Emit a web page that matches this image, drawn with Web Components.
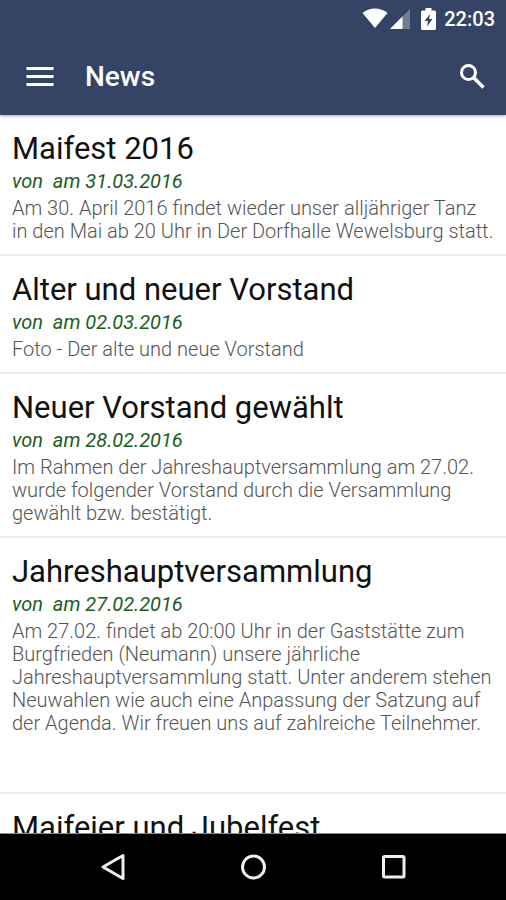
<!DOCTYPE html>
<html lang="de">
<head>
<meta charset="utf-8" />
<meta name="viewport" content="width=device-width, initial-scale=1" />
<title>News</title>
<style>
  html,
  body {
    height: 100%;
    margin: 0;
  }
  body {
    font-family: Roboto, "Liberation Sans", sans-serif;
    background: #fff;
  }
</style>
</head>
<body>
<news-app>
  <status-bar slot="top">22:03</status-bar>
  <app-bar slot="top">News</app-bar>

  <news-item>
    <span slot="title">Maifest 2016</span>
    <span slot="date">31.03.2016</span>
    <span slot="text">Am 30. April 2016 findet wieder unser alljähriger Tanz in den Mai ab 20 Uhr in Der Dorfhalle Wewelsburg statt.</span>
  </news-item>
  <news-item>
    <span slot="title">Alter und neuer Vorstand</span>
    <span slot="date">02.03.2016</span>
    <span slot="text">Foto - Der alte und neue Vorstand</span>
  </news-item>
  <news-item>
    <span slot="title">Neuer Vorstand gewählt</span>
    <span slot="date">28.02.2016</span>
    <span slot="text">Im Rahmen der Jahreshauptversammlung am 27.02. wurde folgender Vorstand durch die Versammlung gewählt bzw. bestätigt.</span>
  </news-item>
  <news-item>
    <span slot="title">Jahreshauptversammlung</span>
    <span slot="date">27.02.2016</span>
    <span slot="text">Am 27.02. findet ab 20:00 Uhr in der Gaststätte zum Burgfrieden (Neumann) unsere jährliche Jahreshauptversammlung statt. Unter anderem stehen Neuwahlen wie auch eine Anpassung der Satzung auf der Agenda. Wir freuen uns auf zahlreiche Teilnehmer.<br /><br /><br /></span>
  </news-item>
  <news-item>
    <span slot="title">Maifeier und Jubelfest</span>
  </news-item>

  <nav-bar slot="bottom"></nav-bar>
</news-app>

<script>
  class NewsApp extends HTMLElement {
    constructor() {
      super();
      let shadowDom = this.attachShadow({ mode: "open" });
      shadowDom.innerHTML = `
        <style>
          :host {
            display: flex;
            flex-direction: column;
            height: 100vh;
          }
          header {
            background: #354464;
            color: #fff;
            box-shadow: 0 1px 3px rgba(0, 0, 0, 0.35);
            z-index: 1;
          }
          main {
            flex: 1;
            min-height: 0;
            overflow: hidden;
          }
        </style>
        <header><slot name="top"></slot></header>
        <main><slot></slot></main>
        <slot name="bottom"></slot>
      `;
    }
  }

  class StatusBar extends HTMLElement {
    constructor() {
      super();
      let shadowDom = this.attachShadow({ mode: "open" });
      shadowDom.innerHTML = `
        <style>
          :host {
            display: flex;
            justify-content: flex-end;
            align-items: center;
            height: 38px;
            padding-right: 11px;
            font-size: 20px;
            font-weight: 500;
          }
          svg {
            display: block;
            fill: currentColor;
          }
          .wifi {
            margin-right: 2px;
          }
          .signal {
            margin-right: 11px;
          }
          .battery {
            margin-right: 8px;
          }
        </style>
        <svg class="wifi" width="26" height="22" viewBox="0 0 26 22" aria-hidden="true">
          <path d="M13 20 0.500 5C4 2 8.300 0.500 13 0.500s9 1.500 12.500 4.500z" />
        </svg>
        <svg class="signal" width="20" height="20" viewBox="0 0 20 20" aria-hidden="true">
          <path d="M20 0v20H0z" opacity="0.300" />
          <path d="M12.500 7.500V20H0z" />
        </svg>
        <svg class="battery" width="15" height="22" viewBox="0 0 15 22" aria-hidden="true">
          <path fill-rule="evenodd" d="M4.500 0h6v2.500H13.500a1.500 1.500 0 0 1 1.500 1.500V20.500a1.500 1.500 0 0 1-1.500 1.500H1.500A1.500 1.500 0 0 1 0 20.500V4a1.500 1.500 0 0 1 1.500-1.500H4.500zM9 6 3.500 13H7l-1 5.500L11.500 11H8z" />
        </svg>
        <slot></slot>
      `;
    }
  }

  class AppBar extends HTMLElement {
    constructor() {
      super();
      let shadowDom = this.attachShadow({ mode: "open" });
      shadowDom.innerHTML = `
        <style>
          :host {
            display: flex;
            align-items: center;
            height: 77px;
            padding: 0 14px 0 20px;
          }
          h1 {
            flex: 1;
            margin: 0 0 0 25px;
            font-size: 28px;
            line-height: 36px;
            font-weight: 500;
          }
          button {
            display: grid;
            place-items: center;
            width: 40px;
            height: 40px;
            padding: 0;
            border: 0;
            background: none;
            color: inherit;
          }
        </style>
        <button aria-label="Menü">
          <svg width="28" height="20" viewBox="0 0 28 20" fill="currentColor">
            <path d="M0.500 0h27v3h-27zM0.500 8h27v3h-27zM0.500 16h27v3h-27z" />
          </svg>
        </button>
        <h1><slot></slot></h1>
        <button aria-label="Suchen">
          <svg width="26" height="26" viewBox="0 0 26 26" fill="none" stroke="currentColor" stroke-width="3">
            <circle cx="9.500" cy="8.500" r="7" />
            <path d="M14.500 13.500l10 10" stroke-width="3.500" />
          </svg>
        </button>
      `;
    }
  }

  class NewsItem extends HTMLElement {
    constructor() {
      super();
      let shadowDom = this.attachShadow({ mode: "open" });
      shadowDom.innerHTML = `
        <style>
          :host {
            display: block;
            padding: 14px 12px 11px;
            border-bottom: 2px solid #eee;
          }
          h2,
          p {
            margin: 0;
            font-weight: 400;
          }
          h2 {
            font-size: 31px;
            line-height: 40px;
            color: #111;
          }
          .date {
            margin-bottom: 4px;
            font-size: 20px;
            line-height: 24px;
            font-style: italic;
            white-space: pre;
            color: #1a5e20;
          }
          .text {
            font-size: 20px;
            line-height: 23px;
            font-weight: 300;
            color: #555;
          }
        </style>
        <h2><slot name="title"></slot></h2>
        <p class="date">von  am <slot name="date"></slot></p>
        <p class="text"><slot name="text"></slot></p>
      `;
    }
  }

  class NavBar extends HTMLElement {
    constructor() {
      super();
      let shadowDom = this.attachShadow({ mode: "open" });
      shadowDom.innerHTML = `
        <style>
          :host {
            display: flex;
            justify-content: center;
            align-items: center;
            gap: 92px;
            height: 66px;
            border-top: 1px solid #888;
            background: #000;
            color: #eee;
          }
          button {
            display: grid;
            place-items: center;
            width: 48px;
            height: 48px;
            padding: 0;
            border: 0;
            background: none;
            color: inherit;
          }
          svg {
            fill: none;
            stroke: currentColor;
            stroke-width: 3;
            stroke-linejoin: round;
          }
        </style>
        <button aria-label="Zurück">
          <svg width="28" height="28" viewBox="0 0 28 28"><path d="M24 2.500v23L4 14z" /></svg>
        </button>
        <button aria-label="Startseite">
          <svg width="28" height="28" viewBox="0 0 28 28"><circle cx="14.500" cy="14" r="11" /></svg>
        </button>
        <button aria-label="Übersicht">
          <svg width="28" height="28" viewBox="0 0 28 28"><rect x="4.500" y="3.500" width="20.500" height="20.500" rx="1" /></svg>
        </button>
      `;
    }
  }

  customElements.define("news-app", NewsApp);
  customElements.define("status-bar", StatusBar);
  customElements.define("app-bar", AppBar);
  customElements.define("news-item", NewsItem);
  customElements.define("nav-bar", NavBar);
</script>
</body>
</html>
